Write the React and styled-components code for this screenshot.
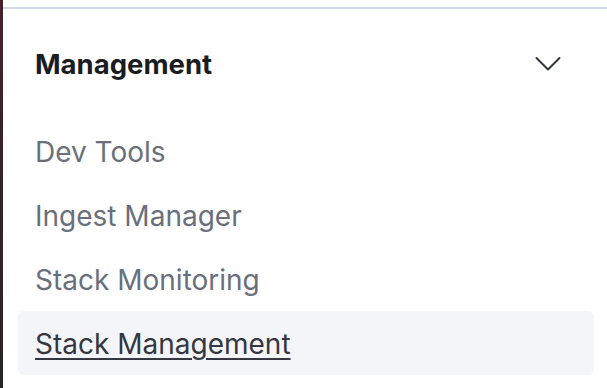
import React from "react";
import styled, { createGlobalStyle } from "styled-components";

const Global = createGlobalStyle`
  html, body { margin: 0; padding: 0; background: #ffffff; }
  body { font-family: Inter, "Noto Sans", sans-serif; }
`;

const Page = styled.div`
  display: flex;
  width: 607px;
  height: 388px;
  overflow: hidden;
  background: #ffffff;
`;

const Stripe = styled.div`
  width: 3px;
  flex: none;
  background: linear-gradient(180deg, #47222d 0%, #3a2229 40%, #2a2328 100%);
`;

const Panel = styled.div`
  flex: 1;
  display: flex;
  flex-direction: column;
  padding-top: 7px;
`;

const Rule = styled.div`
  height: 2px;
  background: #d3dae6;
`;

const Section = styled.div`
  display: flex;
  flex-direction: column;
  padding: 0 13px 0 15px;
`;

const Header = styled.div`
  display: flex;
  align-items: center;
  justify-content: space-between;
  height: 110px;
  padding: 0 33px 0 17px;
  box-sizing: border-box;
`;

const Title = styled.h3`
  margin: 0;
  font-size: 27.5px;
  line-height: 1.2;
  font-weight: 700;
  color: #1a1c21;
`;

const List = styled.ul`
  list-style: none;
  margin: 0;
  padding: 0;
  display: flex;
  flex-direction: column;
`;

const Item = styled.li`
  height: 64px;
  box-sizing: border-box;
  display: flex;
  align-items: center;
  padding: 4px 17px 0;
  border-radius: 6px;
  background: ${(p) => (p.$active ? "#f4f5f9" : "transparent")};
`;

const Link = styled.a`
  font-size: 28px;
  line-height: 1.2;
  font-weight: 400;
  color: ${(p) => (p.$active ? "#343741" : "#69707d")};
  text-decoration: ${(p) => (p.$active ? "underline" : "none")};
  text-decoration-thickness: 2px;
  text-underline-offset: 4px;
  cursor: pointer;
`;

const Chevron = () => (
  <svg width="26" height="16" viewBox="0 0 26 16" fill="none">
    <path d="M1.5 2 L13 13.5 L24.5 2" stroke="#343741" strokeWidth="2" strokeLinecap="round" strokeLinejoin="round" />
  </svg>
);

const items = ["Dev Tools", "Ingest Manager", "Stack Monitoring", "Stack Management"];

export default function App() {
  return (
    <Page>
      <Global />
      <Stripe />
      <Panel>
        <Rule />
        <Section>
          <Header>
            <Title>Management</Title>
            <Chevron />
          </Header>
          <List>
            {items.map((t) => {
              const active = t === "Stack Management";
              return (
                <Item key={t} $active={active}>
                  <Link $active={active}>{t}</Link>
                </Item>
              );
            })}
          </List>
        </Section>
      </Panel>
    </Page>
  );
}
